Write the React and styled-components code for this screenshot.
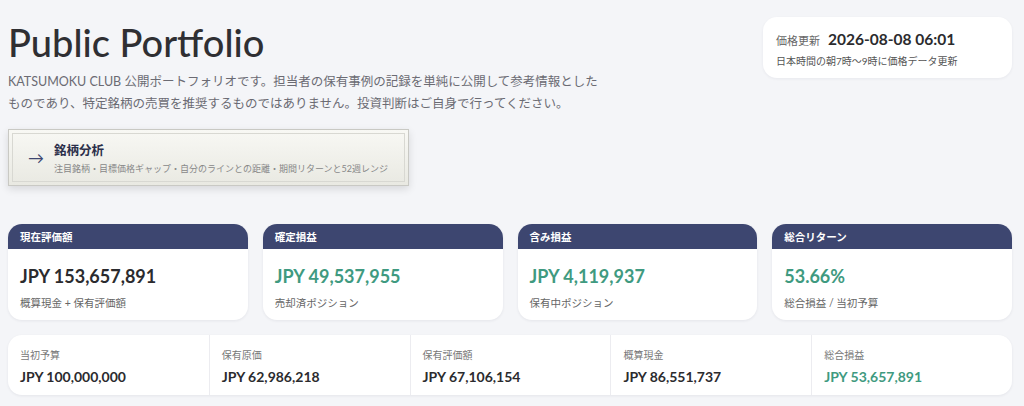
import React from 'react'
import styled, { createGlobalStyle, css } from 'styled-components'

const summary = [
  { label: '現在評価額', value: 'JPY 153,657,891', note: '概算現金 + 保有評価額' },
  { label: '確定損益', value: 'JPY 49,537,955', note: '売却済ポジション', positive: true },
  { label: '含み損益', value: 'JPY 4,119,937', note: '保有中ポジション', positive: true },
  { label: '総合リターン', value: '53.66%', note: '総合損益 / 当初予算', positive: true },
]

const breakdown = [
  { label: '当初予算', value: 'JPY 100,000,000' },
  { label: '保有原価', value: 'JPY 62,986,218' },
  { label: '保有評価額', value: 'JPY 67,106,154' },
  { label: '概算現金', value: 'JPY 86,551,737' },
  { label: '総合損益', value: 'JPY 53,657,891', positive: true },
]

const App = () => (
  <Page>
    <GlobalStyle />
    <Header>
      <Intro>
        <Title>Public Portfolio</Title>
        <Lead>
          KATSUMOKU CLUB 公開ポートフォリオです。担当者の保有事例の記録を単純に公開して参考情報とした
          <br />
          ものであり、特定銘柄の売買を推奨するものではありません。投資判断はご自身で行ってください。
        </Lead>
      </Intro>
      <UpdateBox>
        <UpdateRow>
          <UpdateLabel>価格更新</UpdateLabel>
          <UpdateDate>2026-08-08 06:01</UpdateDate>
        </UpdateRow>
        <UpdateNote>日本時間の朝7時〜9時に価格データ更新</UpdateNote>
      </UpdateBox>
    </Header>

    <LinkButton type="button">
      <Arrow>→</Arrow>
      <LinkText>
        <LinkTitle>銘柄分析</LinkTitle>
        <LinkSub>注目銘柄・目標価格ギャップ・自分のラインとの距離・期間リターンと52週レンジ</LinkSub>
      </LinkText>
    </LinkButton>

    <CardGrid>
      {summary.map(item => (
        <Card key={item.label}>
          <CardHead>{item.label}</CardHead>
          <CardBody>
            <CardValue positive={item.positive}>{item.value}</CardValue>
            <CardNote>{item.note}</CardNote>
          </CardBody>
        </Card>
      ))}
    </CardGrid>

    <Strip>
      {breakdown.map(item => (
        <StripCell key={item.label}>
          <StripLabel>{item.label}</StripLabel>
          <StripValue positive={item.positive}>{item.value}</StripValue>
        </StripCell>
      ))}
    </Strip>
  </Page>
)

export default App

// #region styled-components
const GlobalStyle = createGlobalStyle`
  html, body {
    margin: 0;
    background: #f4f5f8;
  }
  body {
    font-family: Lato, "Noto Sans CJK JP", sans-serif;
    color: #2b2b2e;
  }
`

const numeric = css`
  font-family: Lato, "Noto Sans CJK JP", sans-serif;
  font-weight: 700;
`

const Page = styled.div`
  padding: 16px 12px 10px 8px;
  box-sizing: border-box;
  width: 1024px;
`

const Header = styled.div`
  display: flex;
  justify-content: space-between;
  align-items: flex-start;
`

const Intro = styled.div`
  display: flex;
  flex-direction: column;
`

const Title = styled.h1`
  margin: 0;
  font-size: 38px;
  font-weight: 500;
  line-height: 52px;
  color: #2f2f33;
`

const Lead = styled.p`
  margin: 3px 0 0;
  font-size: 12.5px;
  line-height: 22px;
  color: #6b6b73;
`

const UpdateBox = styled.div`
  margin-top: 1px;
  width: 249px;
  height: 61px;
  box-sizing: border-box;
  padding: 13px 13px 0;
  background: #fff;
  border-radius: 14px;
  box-shadow: 0 1px 3px rgba(30, 35, 60, 0.06);
`

const UpdateRow = styled.div`
  display: flex;
  align-items: baseline;
  gap: 8px;
`

const UpdateLabel = styled.span`
  font-size: 11px;
  color: #666;
`

const UpdateDate = styled.span`
  ${numeric};
  font-size: 15.5px;
  color: #2b2b2e;
`

const UpdateNote = styled.div`
  margin-top: 5px;
  font-size: 10px;
  color: #555;
`

const LinkButton = styled.button`
  margin-top: 14px;
  width: 401px;
  height: 57px;
  display: flex;
  align-items: center;
  gap: 10px;
  padding: 0 0 0 19px;
  box-sizing: border-box;
  text-align: left;
  border: 1px solid #c9c9c4;
  outline: 1px solid #d8d8d2;
  outline-offset: -5px;
  background: linear-gradient(#f8f8f4, #e9e9e2);
  box-shadow: 0 3px 8px rgba(0, 0, 0, 0.12);
  font-family: inherit;
  cursor: pointer;
`

const Arrow = styled.span`
  font-size: 16px;
  color: #3d4670;
  line-height: 1;
`

const LinkText = styled.div`
  display: flex;
  flex-direction: column;
  gap: 3px;
`

const LinkTitle = styled.span`
  font-size: 12.5px;
  font-weight: 700;
  color: #2b2f4a;
`

const LinkSub = styled.span`
  font-size: 9px;
  color: #888;
  white-space: nowrap;
`

const CardGrid = styled.div`
  margin-top: 38px;
  display: grid;
  grid-template-columns: repeat(4, 1fr);
  gap: 15px;
`

const Card = styled.div`
  background: #fff;
  border-radius: 14px;
  overflow: hidden;
  box-shadow: 0 1px 3px rgba(30, 35, 60, 0.07);
  height: 96px;
`

const CardHead = styled.div`
  height: 25px;
  display: flex;
  align-items: center;
  padding: 0 12px;
  background: #3d4670;
  color: #fff;
  font-size: 10.5px;
  font-weight: 700;
`

const CardBody = styled.div`
  padding: 15px 12px 0;
`

const CardValue = styled.div`
  ${numeric};
  font-size: 18px;
  line-height: 24px;
  color: ${({ positive }) => (positive ? '#3f9a80' : '#2b2b2e')};
`

const CardNote = styled.div`
  margin-top: 7px;
  font-size: 10.5px;
  color: #666;
`

const Strip = styled.div`
  margin-top: 15px;
  display: grid;
  grid-template-columns: repeat(5, 1fr);
  height: 60px;
  background: #fff;
  border-radius: 14px;
  box-shadow: 0 1px 3px rgba(30, 35, 60, 0.07);
  overflow: hidden;
`

const StripCell = styled.div`
  padding: 12px 12px 0;
  border-left: 1px solid #ececf0;

  &:first-child {
    border-left: none;
  }
`

const StripLabel = styled.div`
  font-size: 10px;
  color: #777;
`

const StripValue = styled.div`
  ${numeric};
  margin-top: 6px;
  font-size: 14px;
  color: ${({ positive }) => (positive ? '#3f9a80' : '#2b2b2e')};
`
// #endregion
